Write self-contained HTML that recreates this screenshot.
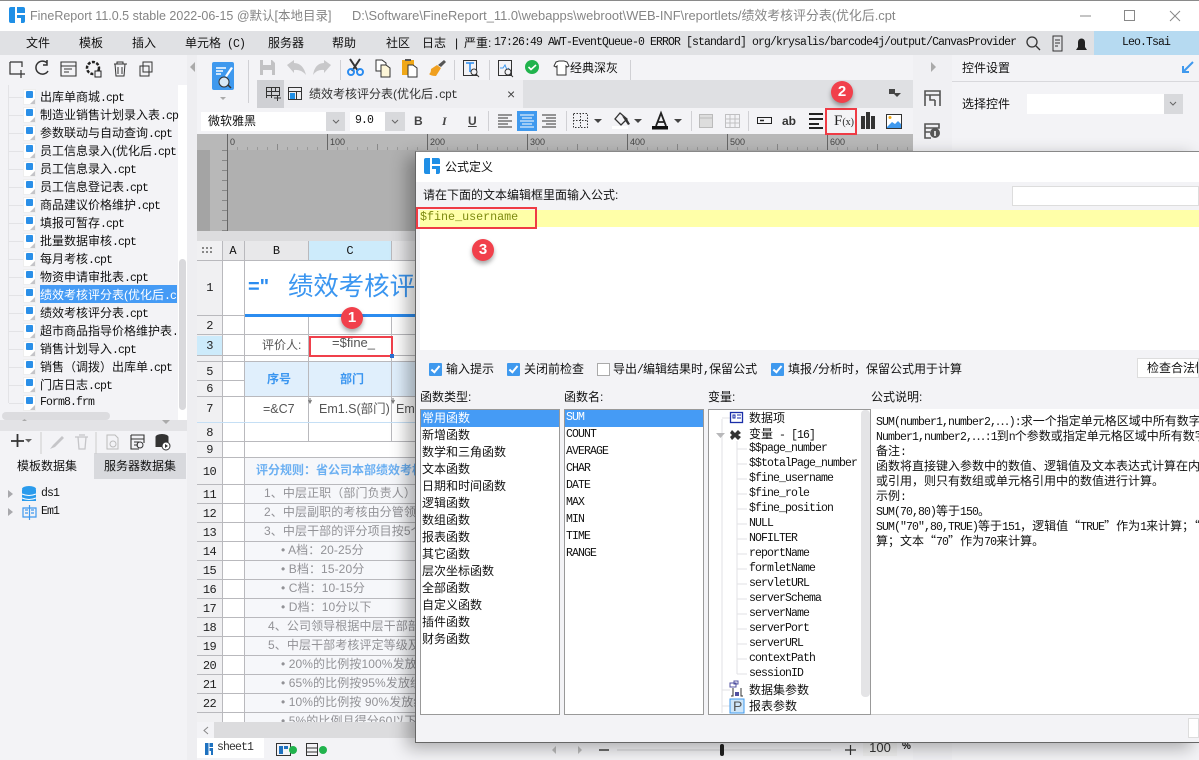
<!DOCTYPE html>
<html><head><meta charset="utf-8"><style>
html,body{margin:0;padding:0}
body{width:1199px;height:760px;overflow:hidden;position:relative;background:#f3f3f6;font-family:"Liberation Sans","Noto Sans CJK SC",sans-serif;font-size:12px;color:#111}
div,span.a{position:absolute}
.t{position:absolute;white-space:nowrap;line-height:16px;height:16px}
.m{font-family:"Liberation Mono","Noto Sans CJK SC",monospace;font-size:11.5px;letter-spacing:-.9px}
.c{font-family:"Noto Sans CJK SC",sans-serif;font-size:12px;letter-spacing:0}
.fi{position:absolute;left:24px;width:11px;height:14px;background:#fff;box-shadow:0 0 0 1px #eee}
.fi:after{content:"";position:absolute;left:2px;top:1px;width:7px;height:7px;background:#2a8fe8;border-radius:1px}
.fi:before{content:"";position:absolute;right:0;bottom:0;border-style:solid;border-width:0 0 5px 5px;border-color:transparent transparent #c4c4c8 transparent}
.tr{left:40px}
.h{color:#111;text-align:center;font-family:"Liberation Mono",monospace;font-size:12px}
.rn{position:absolute;left:197px;width:25px;text-align:center;font-family:"Liberation Mono",monospace;font-size:12px;letter-spacing:-.6px;line-height:14px;color:#222}
.g{color:#929296;font-size:12px;letter-spacing:.1px}
.ln{position:absolute;background:#b9b9bd}
.ft{left:422px;font-size:12px}
.fn{left:566px;font-family:"Liberation Mono",monospace;font-size:11.5px;letter-spacing:-.9px}
.vn{left:749px;font-family:"Liberation Mono",monospace;font-size:11.5px;letter-spacing:-.9px}
.ds{left:876px;font-size:12px;color:#111;width:323px;overflow:hidden}
.cb{position:absolute;width:13px;height:13px;background:#3f99ee;border-radius:1px}
.cb:after{content:"";position:absolute;left:4px;top:1px;width:3px;height:7px;border:solid #fff;border-width:0 2px 2px 0;transform:rotate(40deg)}
.badge{position:absolute;width:22px;height:22px;border-radius:50%;background:#f1404b;color:#fff;text-align:center;font:bold 15px/22px "Liberation Sans",sans-serif;box-shadow:0 3px 5px rgba(0,0,0,.35)}
</style></head><body>

<!-- title bar -->
<div style="left:0;top:0;width:1199px;height:31px;background:#fff"></div>
<div style="left:0;top:0;width:1199px;height:1px;background:#8a8a8a"></div>
<div class="t" style="left:30px;top:8px;font-size:12.500px;color:#858585">FineReport 11.0.5 stable 2022-06-15 @默认[本地目录]</div>
<div class="t" style="left:352px;top:8px;font-size:12.900px;color:#858585">D:\Software\FineReport_11.0\webapps\webroot\WEB-INF\reportlets/绩效考核评分表(优化后.cpt</div>

<!-- menu bar -->
<div style="left:0;top:31px;width:1199px;height:24px;background:#e0e1e4"></div>
<div class="t" style="left:26px;top:35px">文件</div>
<div class="t" style="left:79px;top:35px">模板</div>
<div class="t" style="left:132px;top:35px">插入</div>
<div class="t" style="left:185px;top:35px">单元格<span class="m"> (C)</span></div>
<div class="t" style="left:268px;top:35px">服务器</div>
<div class="t" style="left:332px;top:35px">帮助</div>
<div class="t" style="left:386px;top:35px">社区</div>
<div class="t" style="left:422px;top:35px">日志</div>
<div class="t" style="left:455px;top:35px">|</div>
<div class="t" style="left:464px;top:35px">严重:</div>
<div class="t m" style="left:494px;top:35px">17:26:49 AWT-EventQueue-0 ERROR [standard] org/krysalis/barcode4j/output/CanvasProvider</div>
<div style="left:1094px;top:31px;width:105px;height:24px;background:#b6daf1"></div>
<div class="t m" style="left:1122px;top:35px">Leo.Tsai</div>

<!-- left panel -->
<div style="left:0;top:55px;width:187px;height:705px;background:#f3f3f6"></div>
<div style="left:187px;top:55px;width:10px;height:705px;background:#eeeef1"></div>
<div style="left:178px;top:85px;width:9px;height:335px;background:#fff"></div>
<div style="left:179px;top:259px;width:7px;height:151px;background:#d9d9dc;border-radius:4px"></div>
<div style="left:2px;top:412px;width:108px;height:8px;background:#dcdcdf;border-radius:4px"></div>
<div style="left:0;top:420px;width:187px;height:11px;background:#e3e3e6"></div>
<div style="left:8px;top:85px;width:1px;height:318px;background:#e3e3e6"></div>
<div style="left:9px;top:97px;width:14px;height:307px;background:repeating-linear-gradient(180deg,#e3e3e6 0 1px,transparent 1px 18px)"></div>

<div class="fi" style="top:90px"></div><div class="t tr" style="top:89px">出库单商城<span class="m">.cpt</span></div>
<div class="fi" style="top:108px"></div><div class="t tr" style="top:107px">制造业销售计划录入表<span class="m">.cp</span></div>
<div class="fi" style="top:126px"></div><div class="t tr" style="top:125px">参数联动与自动查询<span class="m">.cpt</span></div>
<div class="fi" style="top:144px"></div><div class="t tr" style="top:143px">员工信息录入(优化后<span class="m">.cpt</span></div>
<div class="fi" style="top:162px"></div><div class="t tr" style="top:161px">员工信息录入<span class="m">.cpt</span></div>
<div class="fi" style="top:180px"></div><div class="t tr" style="top:179px">员工信息登记表<span class="m">.cpt</span></div>
<div class="fi" style="top:198px"></div><div class="t tr" style="top:197px">商品建议价格维护<span class="m">.cpt</span></div>
<div class="fi" style="top:216px"></div><div class="t tr" style="top:215px">填报可暂存<span class="m">.cpt</span></div>
<div class="fi" style="top:234px"></div><div class="t tr" style="top:233px">批量数据审核<span class="m">.cpt</span></div>
<div class="fi" style="top:252px"></div><div class="t tr" style="top:251px">每月考核<span class="m">.cpt</span></div>
<div class="fi" style="top:270px"></div><div class="t tr" style="top:269px">物资申请审批表<span class="m">.cpt</span></div>
<div style="left:40px;top:285px;width:137px;height:18px;background:#459bf5"></div>
<div class="fi" style="top:288px"></div><div class="t tr" style="top:287px;color:#fff;width:136px;overflow:hidden">绩效考核评分表(优化后<span class="m">.c</span></div>
<div class="fi" style="top:306px"></div><div class="t tr" style="top:305px">绩效考核评分表<span class="m">.cpt</span></div>
<div class="fi" style="top:324px"></div><div class="t tr" style="top:323px;width:136px;overflow:hidden">超市商品指导价格维护表<span class="m">.</span></div>
<div class="fi" style="top:342px"></div><div class="t tr" style="top:341px">销售计划导入<span class="m">.cpt</span></div>
<div class="fi" style="top:360px"></div><div class="t tr" style="top:359px">销售（调拨）出库单<span class="m">.cpt</span></div>
<div class="fi" style="top:378px"></div><div class="t tr" style="top:377px">门店日志<span class="m">.cpt</span></div>
<div class="fi" style="top:396px"></div><div class="t tr m" style="top:395px">Form8.frm</div>

<div style="left:0;top:453px;width:94px;height:26px;background:#f3f3f6"></div>
<div style="left:94px;top:453px;width:92px;height:26px;background:#d8d9dd"></div>
<div class="t" style="left:17px;top:458px">模板数据集</div>
<div class="t" style="left:104px;top:458px">服务器数据集</div>
<div class="t m" style="left:41px;top:486px">ds1</div>
<div class="t m" style="left:41px;top:504px">Em1</div>

<!-- toolbars -->
<div style="left:197px;top:55px;width:716px;height:25px;background:#f3f3f6"></div>
<div style="left:257px;top:80px;width:656px;height:28px;background:#dfe0e3"></div>
<div style="left:257px;top:80px;width:27px;height:28px;background:#cfd0d4"></div>
<div style="left:284px;top:80px;width:239px;height:28px;background:#eeeef1"></div>
<div class="t" style="left:309px;top:86px;color:#333">绩效考核评分表(优化后<span class="m">.cpt</span></div>
<div class="t" style="left:507px;top:86px;font-size:14px;color:#444">×</div>
<div class="t" style="left:570px;top:60px">经典深灰</div>
<div style="left:197px;top:108px;width:716px;height:26px;background:#f3f3f6"></div>
<div style="left:201px;top:112px;width:144px;height:19px;background:#fff"></div>
<div style="left:326px;top:112px;width:19px;height:19px;background:#d8d9dc"></div>
<div class="t" style="left:208px;top:113px">微软雅黑</div>
<div style="left:350px;top:112px;width:55px;height:19px;background:#fff"></div>
<div style="left:385px;top:112px;width:20px;height:19px;background:#d8d9dc"></div>
<div class="t m" style="left:355px;top:113px">9.0</div>
<div class="t" style="left:414px;top:113px;font-weight:bold;color:#444">B</div>
<div class="t" style="left:442px;top:113px;font:italic bold 12px/16px 'Liberation Serif',serif;color:#444">I</div>
<div class="t" style="left:468px;top:113px;font-weight:bold;color:#444;text-decoration:underline">U</div>
<div style="left:517px;top:111px;width:20px;height:20px;background:#3f99ee"></div>
<div class="t" style="left:782px;top:113px;font-weight:bold;color:#333">ab</div>
<div class="t" style="left:834px;top:113px;font:15px/16px 'Liberation Serif',serif;color:#222">F<span style="font-size:10px">(x)</span></div>

<!-- ruler -->
<div style="left:197px;top:134px;width:716px;height:97px;background:#b0b0b0"></div>
<div style="left:197px;top:150px;width:13px;height:81px;background:#a4a4a4"></div>
<div style="left:227px;top:134px;width:686px;height:16px;background:#b8b8b8;background-image:repeating-linear-gradient(90deg,#666 0 1px,transparent 1px 100px),repeating-linear-gradient(90deg,#888 0 1px,transparent 1px 50px),repeating-linear-gradient(90deg,#999 0 1px,transparent 1px 10px);background-size:100% 16px,100% 6px,100% 3px;background-position:0 0,0 bottom,0 bottom;background-repeat:no-repeat"></div>
<div style="left:210px;top:150px;width:17px;height:81px;background:#b8b8b8;border-right:1px solid #666;background-image:repeating-linear-gradient(180deg,#888 0 1px,transparent 1px 10px);background-size:5px 100%;background-position:right;background-repeat:no-repeat"></div>
<div style="left:197px;top:134px;width:30px;height:16px;background:#b8b8b8"></div>
<div class="t" style="left:230px;top:134px;font-size:9px;color:#444">0</div>
<div class="t" style="left:330px;top:134px;font-size:9px;color:#444">100</div>
<div class="t" style="left:430px;top:134px;font-size:9px;color:#444">200</div>
<div class="t" style="left:530px;top:134px;font-size:9px;color:#444">300</div>
<div class="t" style="left:630px;top:134px;font-size:9px;color:#444">400</div>
<div class="t" style="left:730px;top:134px;font-size:9px;color:#444">500</div>
<div class="t" style="left:830px;top:134px;font-size:9px;color:#444">600</div>

<!-- right panel -->
<div style="left:913px;top:55px;width:39px;height:705px;background:#f0f0f3"></div>
<div style="left:952px;top:55px;width:247px;height:705px;background:#f3f3f6"></div>
<div style="left:952px;top:81px;width:247px;height:1px;background:#d8d8dc"></div>
<div class="t" style="left:962px;top:60px">控件设置</div>
<div class="t" style="left:962px;top:96px">选择控件</div>
<div style="left:1027px;top:94px;width:156px;height:20px;background:#fff"></div>
<div style="left:1164px;top:94px;width:19px;height:20px;background:#d8d9dc"></div>

<!-- sheet -->
<div style="left:197px;top:231px;width:716px;height:10px;background:#dcdcde"></div>
<div style="left:197px;top:241px;width:716px;height:481px;background:#fff"></div>
<div style="left:197px;top:241px;width:716px;height:19px;background:#e8e8ea"></div>
<div style="left:197px;top:241px;width:25px;height:481px;background:#f0f0f2"></div>
<div style="left:309px;top:241px;width:83px;height:19px;background:#cdebfb"></div>
<div style="left:197px;top:336px;width:25px;height:19px;background:#cdebfb"></div>
<div style="left:245px;top:362px;width:230px;height:34px;background:#e0effc"></div>
<div style="left:245px;top:458px;width:230px;height:264px;background:#f6f7fa"></div>
<div class="ln" style="left:222px;top:241px;width:1px;height:481px"></div>
<div class="ln" style="left:244px;top:241px;width:1px;height:481px"></div>
<div class="ln" style="left:308px;top:241px;width:1px;height:19px"></div>
<div class="ln" style="left:308px;top:315px;width:1px;height:126px"></div>
<div class="ln" style="left:391px;top:241px;width:1px;height:19px"></div>
<div class="ln" style="left:391px;top:315px;width:1px;height:126px"></div>
<div class="ln" style="left:197px;top:260px;width:218px;height:1px"></div>
<div class="ln" style="left:197px;top:315px;width:48px;height:1px"></div>
<div style="left:245px;top:314px;width:170px;height:3px;background:#2b8cf0"></div>
<div class="ln" style="left:197px;top:334px;width:218px;height:1px"></div>
<div class="ln" style="left:197px;top:355px;width:218px;height:1px"></div>
<div class="ln" style="left:197px;top:361px;width:218px;height:1px"></div>
<div class="ln" style="left:197px;top:380px;width:48px;height:1px"></div>
<div class="ln" style="left:197px;top:396px;width:218px;height:1px"></div>
<div style="left:197px;top:422px;width:218px;height:1px;background:#c5dff5"></div>
<div class="ln" style="left:197px;top:441px;width:218px;height:1px"></div>
<div class="ln" style="left:197px;top:457px;width:218px;height:1px"></div>
<div class="ln" style="left:197px;top:484px;width:218px;height:1px"></div>
<div class="ln" style="left:197px;top:503px;width:218px;height:1px"></div>
<div class="ln" style="left:197px;top:522px;width:218px;height:1px"></div>
<div class="ln" style="left:197px;top:541px;width:218px;height:1px"></div>
<div class="ln" style="left:197px;top:560px;width:218px;height:1px"></div>
<div class="ln" style="left:197px;top:579px;width:218px;height:1px"></div>
<div class="ln" style="left:197px;top:598px;width:218px;height:1px"></div>
<div class="ln" style="left:197px;top:617px;width:218px;height:1px"></div>
<div class="ln" style="left:197px;top:636px;width:218px;height:1px"></div>
<div class="ln" style="left:197px;top:655px;width:218px;height:1px"></div>
<div class="ln" style="left:197px;top:674px;width:218px;height:1px"></div>
<div class="ln" style="left:197px;top:693px;width:218px;height:1px"></div>
<div class="ln" style="left:197px;top:712px;width:218px;height:1px"></div>

<div class="t h" style="left:222px;top:243px;width:22px">A</div>
<div class="t h" style="left:245px;top:243px;width:63px">B</div>
<div class="t h" style="left:309px;top:243px;width:82px">C</div>
<div class="rn" style="top:281px">1</div><div class="rn" style="top:319px">2</div><div class="rn" style="top:339px">3</div>
<div class="rn" style="top:365px">5</div><div class="rn" style="top:382px">6</div><div class="rn" style="top:402px">7</div>
<div class="rn" style="top:426px">8</div><div class="rn" style="top:443px">9</div><div class="rn" style="top:465px">10</div>
<div class="rn" style="top:488px">11</div><div class="rn" style="top:507px">12</div><div class="rn" style="top:526px">13</div>
<div class="rn" style="top:545px">14</div><div class="rn" style="top:564px">15</div><div class="rn" style="top:583px">16</div>
<div class="rn" style="top:602px">17</div><div class="rn" style="top:621px">18</div><div class="rn" style="top:640px">19</div>
<div class="rn" style="top:659px">20</div><div class="rn" style="top:678px">21</div><div class="rn" style="top:697px">22</div>
<div class="t" style="left:248px;top:275px;font-size:20px;font-weight:bold;color:#2b8cf0;line-height:24px;height:24px">="</div>
<div class="t" style="left:288px;top:272px;font-size:25.400px;color:#3b96f0;line-height:30px;height:30px;width:127px;overflow:hidden">绩效考核评分</div>
<div class="t" style="left:262px;top:337px;color:#555">评价人:</div>
<div class="t" style="left:332px;top:335px;color:#555;font-size:13px">=$fine_</div>
<div class="t" style="left:267px;top:371px;color:#3b96f0;font-weight:bold">序号</div>
<div class="t" style="left:340px;top:371px;color:#3b96f0;font-weight:bold">部门</div>
<div class="t" style="left:263px;top:401px;color:#555;font-size:12.500px">=&amp;C7</div>
<div class="t" style="left:319px;top:401px;color:#555;font-size:12.500px">Em1.S(部门)</div>
<div class="t" style="left:396px;top:401px;color:#555;font-size:12.500px">Em</div>
<div class="t" style="left:256px;top:462px;color:#6cb0f2;font-weight:bold;font-size:12px">评分规则：省公司本部绩效考核</div>
<div class="t g" style="left:264px;top:485px">1、中层正职（部门负责人）</div>
<div class="t g" style="left:264px;top:504px;width:151px;overflow:hidden">2、中层副职的考核由分管领导</div>
<div class="t g" style="left:264px;top:523px;width:151px;overflow:hidden">3、中层干部的评分项目按5个</div>
<div class="t g" style="left:281px;top:542px">• A档：20-25分</div>
<div class="t g" style="left:281px;top:561px">• B档：15-20分</div>
<div class="t g" style="left:281px;top:580px">• C档：10-15分</div>
<div class="t g" style="left:281px;top:599px">• D档：10分以下</div>
<div class="t g" style="left:268px;top:618px;width:147px;overflow:hidden">4、公司领导根据中层干部部门</div>
<div class="t g" style="left:268px;top:637px;width:147px;overflow:hidden">5、中层干部考核评定等级及</div>
<div class="t g" style="left:281px;top:656px;width:134px;overflow:hidden">• 20%的比例按100%发放绩效</div>
<div class="t g" style="left:281px;top:675px;width:134px;overflow:hidden">• 65%的比例按95%发放绩效</div>
<div class="t g" style="left:281px;top:694px;width:134px;overflow:hidden">• 10%的比例按 90%发放绩效</div>
<div class="t g" style="left:281px;top:713px;width:134px;height:9px;overflow:hidden">• 5%的比例且得分60以下</div>

<div style="left:197px;top:722px;width:716px;height:16px;background:#dcdcde"></div>
<div style="left:197px;top:722px;width:17px;height:16px;background:#f3f3f6"></div>
<div style="left:197px;top:738px;width:716px;height:22px;background:#f3f3f6"></div>
<div style="left:197px;top:738px;width:67px;height:20px;background:#fff"></div>
<div class="t m" style="left:217px;top:740px;color:#333">sheet1</div>
<div class="t" style="left:863px;top:740px;width:34px;text-align:center;font-size:13px;background:#eee;color:#333">100</div>
<div class="t" style="left:902px;top:739px;font-size:10px;font-weight:bold">%</div>

<!-- icons beneath the dialog -->
<svg style="position:absolute;left:0;top:0" width="1199" height="760" viewBox="0 0 1199 760" fill="none">
<!-- logo -->
<path d="M9 9q0-2 2-2h4v16h-4q-2 0-2-2zM17 7h6q2 0 2 2v4h-8zM17 15h8v6q0 2-2 2h-2v-5h-4z" fill="#1f8fe6"/>
<!-- window controls -->
<path d="M1080 16h11" stroke="#888"/><rect x="1124.500" y="10.500" width="10" height="10" stroke="#888"/><path d="M1170 11l10 10M1180 11l-10 10" stroke="#888"/>
<!-- menu right -->
<circle cx="1032" cy="42" r="5" stroke="#333" stroke-width="1.300"/><path d="M1036 46l4 4" stroke="#333" stroke-width="1.300"/>
<path d="M1053 36h9v15h-9zM1055 40h5M1055 43h5M1055 46h3" stroke="#333"/><path d="M1076 50h11l-2-3v-5a3.500 3.500 0 0 0-7 0v5z" fill="#222"/>
<!-- left icons -->
<path d="M10 62h12v5M10 62v12h7M21 70v8M17 74h8" stroke="#333" stroke-width="1.200"/>
<path d="M47 63a6.500 6.500 0 1 0 1 8M47 60v5h-4" stroke="#333" stroke-width="1.500"/>
<path d="M61 62h15v14H61zM61 66h15M64 69h8M64 72h5" stroke="#333" stroke-width="1.100"/>
<circle cx="93" cy="68" r="6" stroke="#222" stroke-width="2.500" stroke-dasharray="3 1.500"/><rect x="95" y="71" width="6" height="6" fill="#f3f3f6" stroke="#222"/>
<path d="M114 64h13M117 64v-2h6v2M115 64l1 12h8l1-12M118 67v7M122 67v7" stroke="#333"/>
<path d="M143 62h9v10h-9zM140 66h9v10h-9z" stroke="#333" fill="#f3f3f6"/>
<path d="M195 62l-5 5 5 5z" fill="#aaa"/>
<!-- left mid toolbar -->
<path d="M11 441h13M17.500 434v13" stroke="#333" stroke-width="1.800"/><path d="M25 439h7l-3.500 3.500z" fill="#666"/>
<path d="M41 432v22" stroke="#ccc"/><path d="M50 449l3-4 9-9 2 2-9 9-5 2z" fill="#c5c5c8"/>
<path d="M75 437h13M78 437l1 12h6l1-12M79 435h6" stroke="#c5c5c8" stroke-width="1.300"/><path d="M96 432v22" stroke="#ccc"/>
<path d="M107 435h8l3 3v11h-11z" stroke="#bbb"/><circle cx="113" cy="444" r="3" stroke="#bbb"/>
<path d="M131 435h13v8M131 435v14h8M131 439h13M134 442h5M134 445h4" stroke="#333" stroke-width="1.100"/><circle cx="140" cy="445" r="3" stroke="#333"/>
<ellipse cx="162" cy="437" rx="6.500" ry="3" fill="#333"/><rect x="155.500" y="437" width="13" height="10" fill="#333"/><circle cx="166" cy="446" r="4" fill="#fff" stroke="#333"/><path d="M165 444l3 2-3 2z" fill="#333"/>
<path d="M22 421h5l-2.500-2zM162 420h8l-4 4z" fill="#aaa"/>
<!-- ds tree -->
<path d="M8 490l5 4-5 4zM8 508l5 4-5 4z" fill="#a8a8ac"/>
<ellipse cx="29" cy="489" rx="7" ry="3" fill="#2a9bec"/><rect x="22" y="490" width="14" height="11" fill="#2a9bec"/><path d="M22 494q7 3 14 0M22 498q7 3 14 0" stroke="#fff"/>
<path d="M23 508h13v9H23zM29.500 505v15M25 510h3M25 513h3M31 510h3M31 513h3" stroke="#3f99ee" stroke-width="1.200"/>
<!-- report big -->
<rect x="212" y="62" width="22" height="28" rx="2" fill="#3f99ee"/><path d="M216 68h10M216 71h7M216 74h5" stroke="#fff" stroke-width="1.500"/><path d="M225 76l6-9 2 1-6 9z" fill="#fff"/><circle cx="224" cy="82" r="5" fill="#d8e8f5" stroke="#333"/><path d="M228 85l3 3" stroke="#333" stroke-width="1.500"/>
<path d="M220 97h6l-3 3z" fill="#aaa"/>
<path d="M248.500 60v43M340.500 60v20M454.500 60v20M489.500 60v20M630.500 60v20M488.500 111v20M566.500 111v20M691.500 111v20M748.500 111v20" stroke="#d0d0d4"/>
<!-- save undo redo -->
<path d="M260 60h12l3 3v12h-15z" fill="#c2c2c4"/><path d="M263 60h8v5h-8zM263 70h9v5h-9z" fill="#f3f3f6"/>
<path d="M287 65l7-5v3q9 0 12 12-5-6-12-5v3z" fill="#c8c8ca"/><path d="M331 65l-7-5v3q-9 0-11 12 4-6 11-5v3z" fill="#c8c8ca"/>
<!-- cut copy paste brush -->
<path d="M350 59l8 12M360 59l-8 12" stroke="#333" stroke-width="2"/><circle cx="351" cy="72" r="3" stroke="#2b8cf0" stroke-width="2"/><circle cx="360" cy="72" r="3" stroke="#2b8cf0" stroke-width="2"/>
<path d="M376 60h6l4 3v8h-10z" fill="#fff" stroke="#333"/><path d="M381 65h5l4 3v9h-9z" fill="#fdf6d8" stroke="#333"/>
<rect x="402" y="60" width="12" height="15" fill="#f0a818"/><rect x="405" y="59" width="6" height="2" fill="#555"/><path d="M408 65h5l4 3v9h-9z" fill="#fff" stroke="#333"/>
<path d="M431 69l6-4 4 3-5 8q-5 0-7-2 2-1 2-5z" fill="#f0a020"/><path d="M438 65l6-5 2 2-5 5z" fill="#555"/>
<!-- T search, chart, check, shirt -->
<rect x="463.500" y="60.500" width="13" height="15" stroke="#333"/><path d="M466 63h8M470 63v9" stroke="#2b8cf0" stroke-width="1.500"/><circle cx="474" cy="72" r="3" fill="#f3f3f6" stroke="#333"/><path d="M476 74l3 3" stroke="#333"/>
<rect x="498.500" y="60.500" width="13" height="15" stroke="#333"/><path d="M500 68l3 0 2-3 2 5 2-2" stroke="#3f99ee"/><circle cx="508" cy="72" r="3" fill="#f3f3f6" stroke="#333"/><path d="M510 74l3 3" stroke="#333"/>
<circle cx="532" cy="67" r="7" fill="#21b34d"/><path d="M528.500 67l2.500 2.500 5-4.500" stroke="#fff" stroke-width="1.600"/>
<path d="M556 62l3-1h5l3 1 2 4-2 1-1-1v9h-9v-9l-1 1-2-1z" fill="#fff" stroke="#333"/>
<!-- tab bar icons -->
<path d="M266.500 87.500h13v8h-13zM266.500 91.500h13M271.500 87v11M275.500 87v4M266.500 87v11" stroke="#333"/><path d="M274 98h7M277.500 95v6" stroke="#333"/>
<path d="M288.500 87.500h13v12h-13zM288.500 91.500h13M296.500 91v8" stroke="#333"/><path d="M290 93h5v6h-5z" fill="#1f8fe6"/>
<path d="M889 89h6v5h-6z" fill="#444"/><path d="M893 93h8l-4 4z" fill="#444"/>
<path d="M333 120l3 3 3-3M392 120l3 3 3-3M1170 102l3 3 3-3" stroke="#666"/>
<!-- align -->
<path d="M498 115h14M498 118h10M498 121h14M498 124h10M498 127h14" stroke="#333"/>
<path d="M520 115h14M522 118h10M520 121h14M522 124h10M520 127h14" stroke="#fff"/>
<path d="M542 115h14M546 118h10M542 121h14M546 124h10M542 127h14" stroke="#333"/>
<!-- border, fill, colour -->
<rect x="573.500" y="113.500" width="14" height="14" stroke="#333" stroke-dasharray="1.500 1.500"/><path d="M573 120.500h15M580.500 113v15" stroke="#333" stroke-dasharray="1.500 1.500"/><path d="M594 119h8l-4 4z" fill="#444"/>
<path d="M620 113l7 6-6 6-6-6z" stroke="#333" stroke-width="1.300"/><path d="M622 116l5 3 3 5-2 1z" fill="#333"/><rect x="612" y="126" width="16" height="3" fill="#fff"/><path d="M634 119h8l-4 4z" fill="#444"/>
<path d="M656 126l5-13 5 13M658 122h6" stroke="#222" stroke-width="1.800"/><rect x="652" y="126" width="16" height="3.500" fill="#111"/><path d="M674 119h8l-4 4z" fill="#444"/>
<rect x="699.500" y="114.500" width="13" height="13" fill="#ddd" stroke="#bbb"/><path d="M699 118h13" stroke="#bbb"/>
<path d="M725.500 114.500h14v13h-14zM725 119h14M725 123h14M730 114v13M735 114v13" stroke="#c0c0c2"/>
<rect x="757.500" y="117.500" width="14" height="6" stroke="#222"/><path d="M760 120.500h4" stroke="#222" stroke-width="1.500"/>
<path d="M809 115h14M809 120h14M809 125h10M809 129h14" stroke="#222" stroke-width="2" transform="translate(0 -1)"/>
<rect x="861" y="116" width="4" height="13" fill="#333"/><rect x="866" y="112" width="4" height="17" fill="#333"/><rect x="871" y="116" width="4" height="13" fill="#333"/>
<rect x="886.500" y="114.500" width="15" height="14" fill="#fff" stroke="#333"/><path d="M887 127l5-5 3 2 3-3 3 3v4h-14z" fill="#3f99ee"/><circle cx="890" cy="117.500" r="1.500" fill="#f0a818"/>
<!-- right strip -->
<path d="M931 62l5 5-5 5z" fill="#aaa"/>
<path d="M925 91h15v4h-15zM925 95v11M930 95v5h5M940 95v11M935 100v6" stroke="#555" stroke-width="1.600"/>
<path d="M925 124h14v4h-14zM925 128v10h6M925 132h5" stroke="#555" stroke-width="1.600"/><circle cx="935" cy="133" r="5" fill="#555"/><path d="M935 131v5" stroke="#fff" stroke-width="1.500"/>
<path d="M1193 62l-10 10M1183 66v6h6" stroke="#3f99ee" stroke-width="2"/>
<!-- sheet misc -->
<path d="M202 247h2v2h-2zM206 247h2v2h-2zM210 247h2v2h-2zM202 251h2v2h-2zM206 251h2v2h-2zM210 251h2v2h-2z" fill="#888"/>
<path d="M310 398v4M308.500 400l1.500 3 1.500-3M393 398v4M391.500 400l1.500 3 1.500-3" stroke="#777"/>
<path d="M208 727l-4 3.500 4 3.500" stroke="#888"/>
<path d="M205 743h3.500v12H205zM209.500 743h3.500v4h-3.500zM209.500 748h3.500v7h-2v-4h-1.500z" fill="#1f72c0"/>
<rect x="276.500" y="743.500" width="14" height="12" stroke="#333"/><path d="M279 746h4v8h-4zM284 746h4v3h-4z" fill="#1f72c0"/><circle cx="293" cy="750" r="4" fill="#21b34d"/>
<rect x="306.500" y="743.500" width="11" height="12" stroke="#333"/><path d="M306 748h11M306 752h11" stroke="#333"/><circle cx="323" cy="750" r="4" fill="#21b34d"/>
<path d="M599 750h10" stroke="#333" stroke-width="1.400"/><path d="M617 750h214" stroke="#d0d0d2"/><rect x="720" y="744" width="4" height="12" rx="2" fill="#222"/><path d="M845 750h11M850.500 745v10" stroke="#333" stroke-width="1.200"/>
<path d="M556 746l-4 4 4 4zM578 746l4 4-4 4z" fill="#bbb"/>
</svg>

<!-- selected cell -->
<div style="left:309px;top:336px;width:80px;height:17px;border:2px solid #f0404b;box-sizing:content-box"></div>
<div style="left:390px;top:354px;width:4px;height:4px;background:#2b6fd0"></div>
<div class="badge" style="left:341px;top:307px">1</div>

<!-- red Fx box / badge 2 -->
<div style="left:825px;top:108px;width:28px;height:23px;border:2px solid #ef3b45"></div>
<div class="badge" style="left:831px;top:81px">2</div>

<!-- dialog -->
<div style="left:415px;top:151px;width:784px;height:592px;background:#f3f3f6;box-shadow:-8px 5px 16px rgba(0,0,0,.3);border-left:1px solid #666;border-bottom:1px solid #666;border-top:1px solid #888;box-sizing:border-box"></div>
<div style="left:416px;top:152px;width:783px;height:30px;background:#fff"></div>
<svg style="position:absolute;left:424px;top:158px" width="17" height="17" viewBox="0 0 17 17"><path d="M0 2q0-2 2-2h4v16H2q-2 0-2-2zM8 0h6q2 0 2 2v4H8zM8 8h8v6q0 2-2 2h-2v-5H8z" fill="#1f8fe6"/></svg>
<div class="t" style="left:445px;top:159px">公式定义</div>
<div class="t" style="left:423px;top:187px">请在下面的文本编辑框里面输入公式:</div>
<div style="left:1012px;top:186px;width:187px;height:20px;background:#fff;border:1px solid #ddd;box-sizing:border-box"></div>
<div style="left:420px;top:210px;width:779px;height:140px;background:#fff"></div>
<div style="left:420px;top:210px;width:779px;height:17px;background:#ffffa8"></div>
<div class="t" style="left:420px;top:209px;font:11.700px/16px 'Liberation Mono',monospace;color:#7d8a10">$fine_username</div>
<div style="left:416px;top:207px;width:117px;height:18px;border:2px solid #ef3b45"></div>
<div class="badge" style="left:472px;top:239px">3</div>

<div class="cb" style="left:429px;top:363px"></div><div class="t" style="left:446px;top:361px">输入提示</div>
<div class="cb" style="left:507px;top:363px"></div><div class="t" style="left:524px;top:361px">关闭前检查</div>
<div style="left:597px;top:363px;width:13px;height:13px;background:#fff;border:1px solid #aaa;box-sizing:border-box"></div><div class="t" style="left:613px;top:361px">导出<span class="m">/</span>编辑结果时<span class="m">,</span>保留公式</div>
<div class="cb" style="left:771px;top:363px"></div><div class="t" style="left:788px;top:361px">填报<span class="m">/</span>分析时，保留公式用于计算</div>
<div style="left:1137px;top:358px;width:62px;height:20px;background:#fff;border:1px solid #ddd;box-sizing:border-box;overflow:hidden;white-space:nowrap;padding:1px 0 0 9px;line-height:16px">检查合法性</div>

<div class="t" style="left:420px;top:389px">函数类型:</div>
<div class="t" style="left:564px;top:389px">函数名:</div>
<div class="t" style="left:708px;top:389px">变量:</div>
<div class="t" style="left:871px;top:389px">公式说明:</div>

<div style="left:420px;top:409px;width:140px;height:306px;background:#fff;border:1px solid #999;box-sizing:border-box"></div>
<div style="left:564px;top:409px;width:140px;height:306px;background:#fff;border:1px solid #999;box-sizing:border-box"></div>
<div style="left:708px;top:409px;width:163px;height:306px;background:#fff;border:1px solid #999;box-sizing:border-box"></div>
<div style="left:871px;top:409px;width:328px;height:306px;background:#fff;border-bottom:1px solid #ccc;box-sizing:border-box"></div>
<div style="left:421px;top:410px;width:138px;height:17px;background:#459bf5"></div>
<div style="left:565px;top:410px;width:138px;height:17px;background:#459bf5"></div>
<div style="left:861px;top:410px;width:9px;height:287px;background:#e4e4e6;border-radius:4px"></div>

<div class="t ft" style="top:410px;color:#fff">常用函数</div>
<div class="t ft" style="top:427px">新增函数</div>
<div class="t ft" style="top:444px">数学和三角函数</div>
<div class="t ft" style="top:461px">文本函数</div>
<div class="t ft" style="top:478px">日期和时间函数</div>
<div class="t ft" style="top:495px">逻辑函数</div>
<div class="t ft" style="top:512px">数组函数</div>
<div class="t ft" style="top:529px">报表函数</div>
<div class="t ft" style="top:546px">其它函数</div>
<div class="t ft" style="top:563px">层次坐标函数</div>
<div class="t ft" style="top:580px">全部函数</div>
<div class="t ft" style="top:597px">自定义函数</div>
<div class="t ft" style="top:614px">插件函数</div>
<div class="t ft" style="top:631px">财务函数</div>

<div class="t fn" style="top:410px;color:#fff">SUM</div>
<div class="t fn" style="top:427px">COUNT</div>
<div class="t fn" style="top:444px">AVERAGE</div>
<div class="t fn" style="top:461px">CHAR</div>
<div class="t fn" style="top:478px">DATE</div>
<div class="t fn" style="top:495px">MAX</div>
<div class="t fn" style="top:512px">MIN</div>
<div class="t fn" style="top:529px">TIME</div>
<div class="t fn" style="top:546px">RANGE</div>

<div class="t" style="left:749px;top:410px">数据项</div>
<div class="t" style="left:749px;top:426px">变量<span class="m"> - [16]</span></div>
<div class="t vn" style="top:441px">$$page_number</div>
<div class="t vn" style="top:456px">$$totalPage_number</div>
<div class="t vn" style="top:471px">$fine_username</div>
<div class="t vn" style="top:486px">$fine_role</div>
<div class="t vn" style="top:501px">$fine_position</div>
<div class="t vn" style="top:516px">NULL</div>
<div class="t vn" style="top:531px">NOFILTER</div>
<div class="t vn" style="top:546px">reportName</div>
<div class="t vn" style="top:561px">formletName</div>
<div class="t vn" style="top:576px">servletURL</div>
<div class="t vn" style="top:591px">serverSchema</div>
<div class="t vn" style="top:606px">serverName</div>
<div class="t vn" style="top:621px">serverPort</div>
<div class="t vn" style="top:636px">serverURL</div>
<div class="t vn" style="top:651px">contextPath</div>
<div class="t vn" style="top:666px">sessionID</div>
<div class="t" style="left:749px;top:682px">数据集参数</div>
<div class="t" style="left:749px;top:698px">报表参数</div>
<svg style="position:absolute;left:708px;top:409px" width="50" height="306" viewBox="708 409 50 306" fill="none">
<path d="M722 419v294M722 418h8M737 441v233M737 449h10M737 464h10M737 479h10M737 494h10M737 509h10M737 524h10M737 539h10M737 554h10M737 569h10M737 584h10M737 599h10M737 614h10M737 629h10M737 644h10M737 659h10M737 674h10M722 690h8M722 706h8" stroke="#e2e2e4"/>
<rect x="730.500" y="412.500" width="12" height="10" fill="#fff" stroke="#1a2ea8" stroke-width="1.300"/><path d="M733 415h2v3h-2zM737 415h4M737 418h4" stroke="#1a2ea8"/>
<path d="M716 433h9l-4.500 5z" fill="#b8b8ba"/>
<path d="M732 430l3 3 3-3 3 3-3 2 3 2-3 3-3-3-3 3-2-3 2-2-2-2z" fill="#333"/>
<rect x="730" y="683" width="6" height="4" stroke="#5050a0"/><rect x="734" y="681" width="4" height="3" stroke="#5050a0"/><path d="M733 688v8h-2M741 688v8h2" stroke="#333"/><path d="M735 692h4v4h-4z" fill="#5050a0"/>
<rect x="730" y="699" width="14" height="14" fill="#cfe6f8" stroke="#3f99ee"/>
</svg>
<div class="t" style="left:733px;top:698px;font-size:14px;color:#555">P</div>

<div class="t ds" style="top:413px"><span class="m">SUM(number1,number2,</span><span class="c">⋯</span><span class="m">):</span>求一个指定单元格区域中所有数字</div>
<div class="t ds" style="top:428px"><span class="m">Number1,number2,</span><span class="c">⋯</span><span class="m">:1</span>到<span class="m">n</span>个参数或指定单元格区域中所有数字</div>
<div class="t ds" style="top:443px">备注<span class="m">:</span></div>
<div class="t ds" style="top:458px">函数将直接键入参数中的数值、逻辑值及文本表达式计算在内</div>
<div class="t ds" style="top:473px">或引用，则只有数组或单元格引用中的数值进行计算。</div>
<div class="t ds" style="top:488px">示例<span class="m">:</span></div>
<div class="t ds" style="top:503px"><span class="m">SUM(70,80)</span>等于<span class="m">150</span>。</div>
<div class="t ds" style="top:518px"><span class="m">SUM("70",80,TRUE)</span>等于<span class="m">151</span>，逻辑值<span class="c">“</span><span class="m">TRUE</span><span class="c">”</span>作为<span class="m">1</span>来计算；<span class="c">“</span></div>
<div class="t ds" style="top:533px">算；文本<span class="c">“</span><span class="m">70</span><span class="c">”</span>作为<span class="m">70</span>来计算。</div>

<div style="left:1188px;top:718px;width:11px;height:20px;background:#fff;border:1px solid #ddd;box-sizing:border-box"></div>
</body></html>
